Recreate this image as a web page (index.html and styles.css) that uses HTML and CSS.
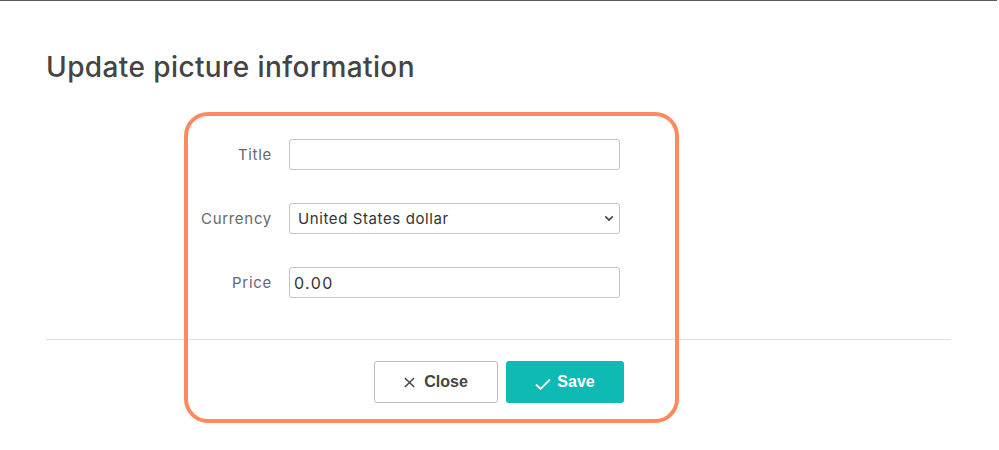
FILE: index.html
```html
<!DOCTYPE html>
<html lang="en">
<head>
    <meta charset="UTF-8">
    <meta name="viewport" content="width=device-width, initial-scale=1.0">
    <title>Update picture information</title>
    <link rel="stylesheet" href="styles.css">
</head>
<body>
    <div class="modal">
        <h2 class="modal-title">Update picture information</h2>

        <form class="modal-body">
            <div class="form-row">
                <label for="title">Title</label>
                <input type="text" id="title" class="field">
            </div>
            <div class="form-row">
                <label for="currency">Currency</label>
                <div class="select-wrap">
                    <select id="currency" class="field">
                        <option>United States dollar</option>
                    </select>
                    <svg class="chevron" viewBox="0 0 12 8" width="10" height="7">
                        <path d="M1.5 1.5 L6 6 L10.5 1.5" fill="none" stroke="#444" stroke-width="2"/>
                    </svg>
                </div>
            </div>
            <div class="form-row">
                <label for="price">Price</label>
                <input type="text" id="price" class="field price" value="0.00">
            </div>
        </form>

        <div class="modal-footer">
            <button type="button" class="btn btn-close">
                <svg viewBox="0 0 12 12" width="11" height="11">
                    <path d="M1 1 L11 11 M11 1 L1 11" stroke="#444" stroke-width="1.6"/>
                </svg>
                Close
            </button>
            <button type="button" class="btn btn-save">
                <svg viewBox="0 0 16 12" width="16" height="12">
                    <path d="M1 6.5 L5.5 11 L15 1.5" fill="none" stroke="#fff" stroke-width="1.8"/>
                </svg>
                Save
            </button>
        </div>

        <!-- highlight drawn over the form -->
        <div class="highlight"></div>
    </div>
</body>
</html>
```

FILE: styles.css
```css
* {
    box-sizing: border-box;
    margin: 0;
    padding: 0;
}

body {
    font-family: Inter, 'Noto Sans', sans-serif;
    background: #fff;
    width: 999px;
    height: 450px;
    overflow: hidden;
}

.modal {
    position: relative;
    width: 997px;
    height: 450px;
    border-top: 1px solid #5a5a5a;
    padding: 0 46px;
}

.modal-title {
    font-size: 28px;
    font-weight: 500;
    color: #444;
    letter-spacing: 0.4px;
    padding-top: 48px;
    line-height: 36px;
    height: 138px;
}

.modal-body {
    display: flex;
    flex-direction: column;
    gap: 33px;
    padding-bottom: 41px;
    border-bottom: 1px solid #e0e0e0;
}

.form-row {
    display: grid;
    grid-template-columns: 226px 331px;
    column-gap: 17px;
    align-items: center;
}

.form-row label {
    text-align: right;
    font-size: 15px;
    letter-spacing: 0.7px;
    color: #666870;
}

.field {
    width: 331px;
    height: 31px;
    border: 1px solid #c4c4c4;
    border-radius: 3px;
    background: #fff;
    font-family: Inter, 'Noto Sans', sans-serif;
    font-size: 15px;
    letter-spacing: 0.6px;
    color: #333;
    padding: 0 8px;
    outline: none;
}

.field.price {
    padding-left: 4px;
    font-size: 16px;
    letter-spacing: 1.4px;
}

.select-wrap {
    position: relative;
}

select.field {
    appearance: none;
    -webkit-appearance: none;
}

.chevron {
    position: absolute;
    right: 6px;
    top: 12px;
    pointer-events: none;
}

.modal-footer {
    display: flex;
    gap: 8px;
    padding: 21px 0 0 328px;
}

.btn {
    display: flex;
    align-items: center;
    justify-content: center;
    gap: 9px;
    height: 42px;
    border-radius: 3px;
    font-family: 'Liberation Sans', Arial, sans-serif;
    font-size: 16px;
    font-weight: bold;
    cursor: pointer;
}

.btn-close {
    width: 124px;
    background: #fff;
    border: 1px solid #bdbdbd;
    color: #444;
}

.btn-save {
    width: 118px;
    background: #0dbab4;
    border: none;
    color: #fff;
    gap: 6px;
}

.btn-save svg {
    margin-top: 3px;
}

.highlight {
    position: absolute;
    left: 184px;
    top: 111px;
    width: 495px;
    height: 311px;
    border: 4px solid #ff8a5f;
    border-radius: 24px;
    pointer-events: none;
}
```
